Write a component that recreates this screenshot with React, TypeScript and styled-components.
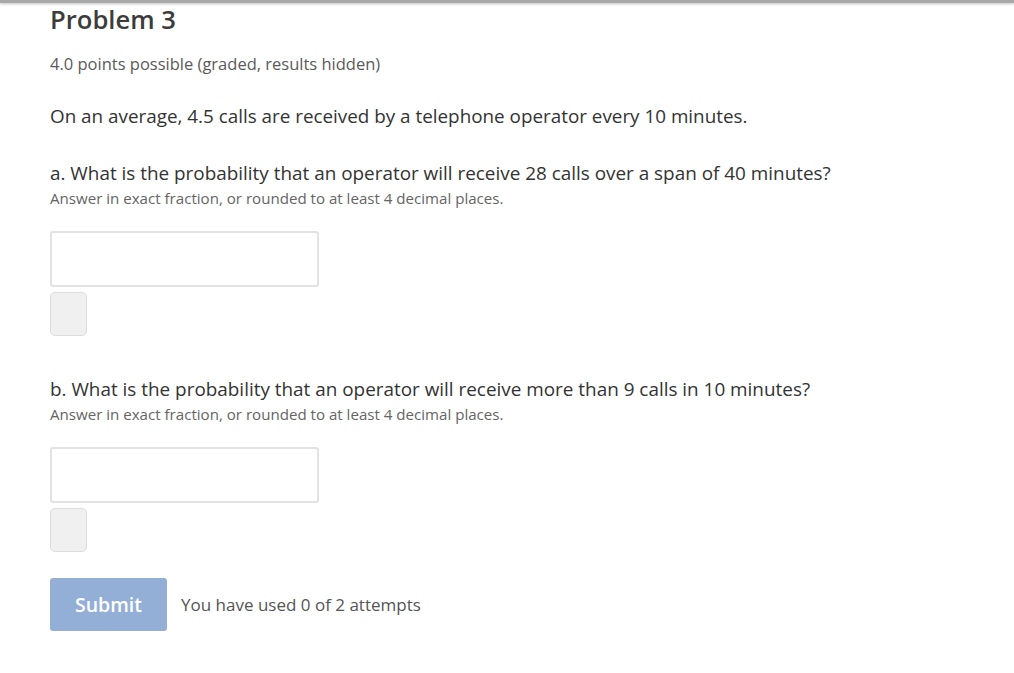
import React from 'react'
import styled, { createGlobalStyle } from 'styled-components'

const GlobalStyle = createGlobalStyle`
    html, body {
        margin: 0;
        padding: 0;
        background: #ffffff;
    }
    body {
        font-family: 'Open Sans', 'Noto Sans', sans-serif;
        color: #333333;
    }
`

const TopRule = styled.div`
    height: 3px;
    background: #a8a8a8;
    box-shadow: 0 1px 3px rgba(0, 0, 0, 0.25);
`

const Page = styled.div`
    padding: 0 50px;
`

const Title = styled.h3`
    margin: 0;
    font-size: 25.6px;
    font-weight: 600;
    line-height: 34px;
    color: #3c3c3c;
`

const Meta = styled.div`
    margin-top: 16px;
    font-size: 16.5px;
    line-height: 22px;
    color: #5a5a5a;
`

const Lead = styled.p`
    margin: 28px 0 0;
    font-size: 18.85px;
    line-height: 26px;
    color: #333333;
`

const Part = styled.div<{ first?: boolean }>`
    margin-top: ${(p) => (p.first ? '31px' : '40px')};
`

const Question = styled.div`
    font-size: 18.9px;
    line-height: 26px;
    color: #333333;
`

const Hint = styled.div`
    margin-top: 2px;
    font-size: 15.1px;
    line-height: 20px;
    color: #646464;
`

const AnswerInput = styled.input`
    display: block;
    box-sizing: border-box;
    margin-top: 23px;
    width: 269px;
    height: 56px;
    border: 2px solid #e2e2e2;
    border-radius: 3px;
    background: #ffffff;
    outline: none;
`

const StatusBox = styled.div`
    box-sizing: border-box;
    margin-top: 5px;
    width: 37px;
    height: 44px;
    border: 1px solid #dddddd;
    border-radius: 5px;
    background: #f0f0f0;
`

const Actions = styled.div`
    display: flex;
    align-items: center;
    gap: 14px;
    margin-top: 26px;
`

const SubmitButton = styled.button`
    width: 117px;
    height: 53px;
    border: none;
    border-radius: 3px;
    background: #94afd6;
    color: #ffffff;
    font-family: 'Open Sans', 'Noto Sans', sans-serif;
    font-size: 19.5px;
    font-weight: 600;
    cursor: default;
`

const Attempts = styled.span`
    font-size: 17px;
    color: #555555;
`

const parts = [
    {
        question:
            'a. What is the probability that an operator will receive 28 calls over a span of 40 minutes?',
    },
    {
        question:
            'b. What is the probability that an operator will receive more than 9 calls in 10 minutes?',
    },
]

export default function App() {
    return (
        <>
            <GlobalStyle />
            <TopRule />
            <Page>
                <Title>Problem 3</Title>
                <Meta>4.0 points possible (graded, results hidden)</Meta>
                <Lead>
                    On an average, 4.5 calls are received by a telephone operator every 10
                    minutes.
                </Lead>
                {parts.map((part, i) => (
                    <Part key={i} first={i === 0}>
                        <Question>{part.question}</Question>
                        <Hint>
                            Answer in exact fraction, or rounded to at least 4 decimal places.
                        </Hint>
                        <AnswerInput type="text" />
                        <StatusBox />
                    </Part>
                ))}
                <Actions>
                    <SubmitButton type="button">Submit</SubmitButton>
                    <Attempts>You have used 0 of 2 attempts</Attempts>
                </Actions>
            </Page>
        </>
    )
}
